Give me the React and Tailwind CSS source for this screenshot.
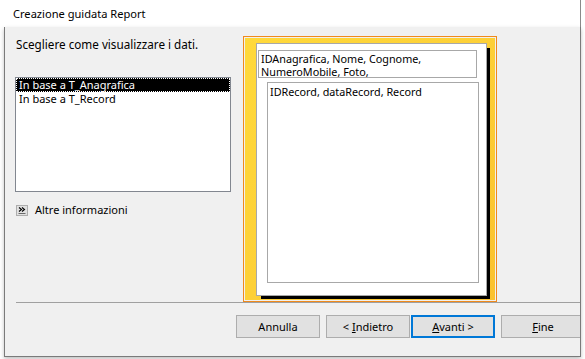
export default function App() {
  const font = { fontFamily: '"Segoe UI", "Noto Sans", "Open Sans", sans-serif' };
  return (
    <div className="w-[585px] h-[359px] bg-white overflow-hidden text-[11px] text-black" style={font}>
      {/* title bar */}
      <div className="w-[581px] h-[27px] border-r border-[#8a8a8a] bg-white flex items-center pl-[13px] leading-[16px] text-[11.1px]">
        Creazione guidata Report
      </div>

      {/* window body */}
      <div className="ml-[4px] w-[577px] h-[330px] bg-[#f0f0f0] border-l border-r border-b border-[#7a7a7a] shadow-[0_2px_4px_rgba(0,0,0,0.25)] overflow-hidden flex flex-col">
        <div className="flex pt-[9px] pl-[10px] h-[275px]">
          <div className="w-[216px] flex flex-col">
            <div className="pl-[1px] h-[16px] leading-[16px] text-[11.7px]">Scegliere come visualizzare i dati.</div>
            <div className="mt-[25px] h-[115px] bg-white border border-[#828790] leading-[14px]">
              <div className="h-[14px] bg-black text-white pl-[3px] outline-1 outline-dotted outline-white -outline-offset-1">
                In base a T_Anagrafica
              </div>
              <div className="h-[14px] pl-[3px]">In base a T_Record</div>
            </div>
            <div className="mt-[11px] flex items-center pl-[1px] h-[14px]">
              <div className="w-[12px] h-[11px] border border-[#adadad] bg-[#e1e1e1] flex items-center justify-center">
                <svg width="10" height="9" viewBox="0 0 10 9">
                  <path d="M2 1.5 L4.5 3.5 L2 5.5 M5 1.5 L7.5 3.5 L5 5.5" fill="none" stroke="#000" strokeWidth="1.1" />
                  <path d="M1.5 7.5 H8.5" stroke="#6a6a6a" strokeWidth="1" />
                </svg>
              </div>
              <span className="ml-[7px] leading-[14px]">Altre informazioni</span>
            </div>
          </div>

          {/* preview */}
          <div className="ml-[12px] w-[254px] h-[266px] border border-[#f08a1c] p-px">
            <div className="w-full h-full bg-gradient-to-br from-[#ffd93b] via-[#fdd037] to-[#fbc22e] pl-[11px] pt-[5px]">
              <div className="w-[231px] h-[253px] bg-white border border-[#a8a8a8] shadow-[4px_4px_0_-1px_#000] flex flex-col leading-[13px] text-[10.8px]">
                <div className="ml-px mt-[6px] w-[219px] h-[28px] border border-[#a8a8a8] pl-[2px] pt-px">
                  <div>IDAnagrafica, Nome, Cognome,</div>
                  <div>NumeroMobile, Foto,</div>
                </div>
                <div className="ml-[10px] mt-[4px] w-[212px] h-[201px] border border-[#a8a8a8] pl-[2px] pt-[2px]">
                  IDRecord, dataRecord, Record
                </div>
              </div>
            </div>
          </div>
        </div>

        <div className="ml-[11px] h-px bg-[#a0a0a0]" />

        <div className="flex mt-[12px] pl-[231px] leading-[16px]">
          <button className="w-[84px] h-[23px] shrink-0 bg-[#e1e1e1] border border-[#adadad]">Annulla</button>
          <button className="ml-[6px] w-[84px] h-[23px] shrink-0 bg-[#e1e1e1] border border-[#adadad]">
            &lt; <span className="underline">I</span>ndietro
          </button>
          <button className="ml-px w-[84px] h-[23px] shrink-0 bg-[#e1e1e1] border-2 border-[#0078d7]">
            <span className="underline">A</span>vanti &gt;
          </button>
          <button className="ml-[6px] w-[84px] h-[23px] shrink-0 bg-[#e1e1e1] border border-[#adadad]">
            <span className="underline">F</span>ine
          </button>
        </div>
      </div>
    </div>
  );
}
